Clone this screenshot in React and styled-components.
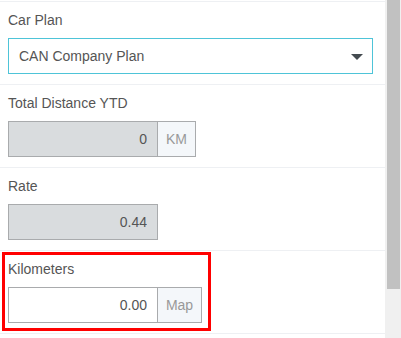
import styled, { createGlobalStyle } from 'styled-components'

const GlobalStyle = createGlobalStyle`
	html, body {
		margin: 0;
		padding: 0;
		background: #fff;
		font-family: 'Liberation Sans', Arial, sans-serif;
	}
`

const Frame = styled.div`
	display: flex;
	height: 338px;
	overflow: hidden;
	background: #fff;
`

const Form = styled.div`
	flex: 1;
	padding-top: 1px;
`

const ScrollTrack = styled.div`
	width: 16px;
	flex-shrink: 0;
	background: #f0f0f0;
	padding: 0 1px 0 2px;
	box-sizing: border-box;
`

const ScrollThumb = styled.div`
	height: 289px;
	background: #c1c1c1;
`

const Row = styled.div`
	position: relative;
	padding: 8px 12px 10px 8px;
	border-top: 1px solid #eef0f3;
	&:last-child {
		border-bottom: 1px solid #eef0f3;
	}
`

const Label = styled.div`
	font-size: 14px;
	line-height: 20px;
	color: #555;
	margin-bottom: 8px;
`

const SelectWrap = styled.div`
	position: relative;
`

const Select = styled.select`
	display: block;
	width: 100%;
	height: 36px;
	box-sizing: border-box;
	appearance: none;
	border: 1px solid #4ec4d8;
	border-radius: 0;
	background: #fff;
	padding: 0 30px 0 10px;
	font-family: inherit;
	font-size: 14px;
	color: #555;
	outline: none;
`

const Caret = styled.svg`
	position: absolute;
	right: 10px;
	top: 16px;
	pointer-events: none;
`

const Group = styled.div`
	display: flex;
	height: 36px;
`

const Input = styled.input`
	width: 150px;
	height: 36px;
	box-sizing: border-box;
	border: 1px solid #a9abad;
	border-radius: 0;
	background: ${({ disabled }) => (disabled ? '#d9dcde' : '#fff')};
	padding: 0 10px;
	text-align: right;
	font-family: inherit;
	font-size: 14px;
	color: #555;
	outline: none;
	-webkit-text-fill-color: #555;
	opacity: 1;
`

const Addon = styled.div`
	width: ${({ $w }) => $w}px;
	height: 36px;
	box-sizing: border-box;
	border: 1px solid #a9abad;
	border-left: 0;
	background: #f4f7fa;
	display: flex;
	align-items: center;
	justify-content: center;
	font-size: 14px;
	color: #999;
`

const Highlight = styled.div`
	position: absolute;
	left: 2px;
	top: 1px;
	width: 209px;
	height: 79px;
	box-sizing: border-box;
	border: 3px solid #ff0000;
	pointer-events: none;
`

export default function App() {
	return (
		<>
			<GlobalStyle />
			<Frame>
				<Form>
					<Row>
						<Label>Car Plan</Label>
						<SelectWrap>
							<Select defaultValue="can">
								<option value="can">CAN Company Plan</option>
							</Select>
							<Caret width="12" height="6" viewBox="0 0 12 6">
								<path d="M0 0h12L6 6z" fill="#444b50" />
							</Caret>
						</SelectWrap>
					</Row>
					<Row>
						<Label>Total Distance YTD</Label>
						<Group>
							<Input disabled value="0" readOnly />
							<Addon $w={38}>KM</Addon>
						</Group>
					</Row>
					<Row>
						<Label>Rate</Label>
						<Group>
							<Input disabled value="0.44" readOnly />
						</Group>
					</Row>
					<Row>
						<Highlight />
						<Label>Kilometers</Label>
						<Group>
							<Input defaultValue="0.00" />
							<Addon $w={44}>Map</Addon>
						</Group>
					</Row>
				</Form>
				<ScrollTrack>
					<ScrollThumb />
				</ScrollTrack>
			</Frame>
		</>
	)
}
